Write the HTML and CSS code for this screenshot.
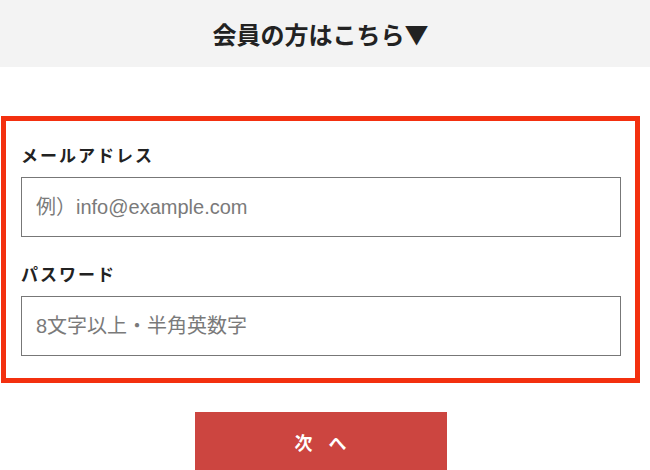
FILE: index.html
```html
<!DOCTYPE html>
<html lang="ja">
<head>
    <meta charset="UTF-8">
    <meta name="viewport" content="width=device-width, initial-scale=1.0">
    <title>ログイン</title>
    <link rel="stylesheet" href="styles.css">
</head>
<body>

<div class="member-head">
    <h2>会員の方はこちら▼</h2>
</div>

<div class="login">
    <div class="login-box">
        <div class="form-group">
            <label for="email">メールアドレス</label>
            <input type="text" id="email" placeholder="例）info@example.com">
        </div>
        <div class="form-group">
            <label for="password">パスワード</label>
            <input type="password" id="password" placeholder="8文字以上・半角英数字">
        </div>
    </div>
    <div class="buttons">
        <button id="nextButton">次へ</button>
    </div>
</div>

</body>
</html>
```

FILE: styles.css
```css
body {
    margin: 0;
    font-family: 'Liberation Sans', 'Noto Sans CJK JP', sans-serif;
    background-color: white;
    color: #222;
}
.member-head {
    background-color: #f3f3f3;
    height: 67px;
    padding-right: 9px;
    display: flex;
    align-items: center;
    justify-content: center;
}
.member-head h2 {
    margin: 0;
    font-family: 'Noto Sans CJK JP', sans-serif;
    font-size: 24px;
    font-weight: bold;
    color: #222;
}
.login {
    margin: 49px 10px 0 1px;
}
.login-box {
    border: 5px solid #f3300f;
    padding: 22px 13px 22px 15px;
}
.form-group {
    margin-bottom: 25px;
}
.form-group:last-child {
    margin-bottom: 0;
}
.form-group label {
    display: block;
    font-family: 'Noto Sans CJK JP', sans-serif;
    font-size: 17px;
    font-weight: bold;
    letter-spacing: 2px;
    line-height: 24px;
    margin-bottom: 10px;
}
.form-group input {
    display: block;
    box-sizing: border-box;
    width: 600px;
    height: 60px;
    padding: 0 14px;
    border: 1px solid #777;
    border-radius: 0;
    font-family: 'Liberation Sans', 'Noto Sans CJK JP', sans-serif;
    font-size: 20px;
    color: #333;
    outline: none;
}
.form-group input::placeholder {
    color: #7a7a7a;
}
.buttons {
    display: flex;
    justify-content: center;
    margin-top: 29px;
}
button {
    width: 252px;
    height: 60px;
    border: none;
    border-radius: 0;
    background-color: #cc4540;
    color: white;
    font-family: 'Noto Sans CJK JP', sans-serif;
    font-size: 18px;
    font-weight: bold;
    letter-spacing: 16px;
    padding: 0 0 0 16px;
    cursor: pointer;
}
```
